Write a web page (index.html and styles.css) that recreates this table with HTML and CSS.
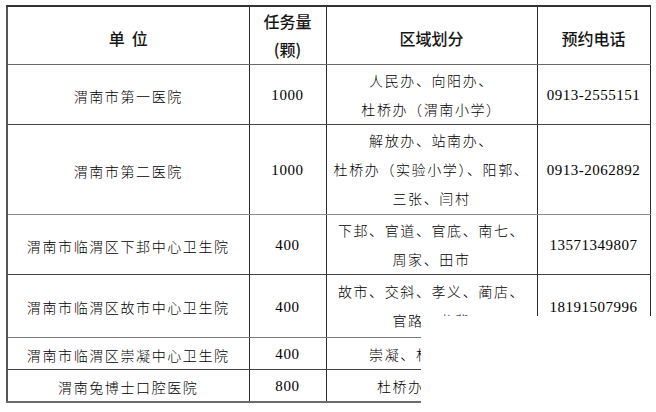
FILE: index.html
```html
<!DOCTYPE html>
<html lang="zh-CN">
<head>
<meta charset="utf-8">
<title>预约表</title>
<link rel="stylesheet" href="styles.css">
</head>
<body>
<div class="sheet">
  <table class="grid">
    <colgroup>
      <col class="c-unit"><col class="c-qty"><col class="c-area"><col class="c-tel">
    </colgroup>
    <thead>
      <tr class="r-head">
        <th class="h-unit">单&nbsp;&nbsp;位</th>
        <th class="h-qty"><div>任务量</div><div>(颗)</div></th>
        <th class="h-pad">区域划分</th>
        <th class="h-pad">预约电话</th>
      </tr>
    </thead>
    <tbody>
      <tr class="r1">
        <td class="zh">渭南市第一医院</td>
        <td class="num">1000</td>
        <td class="zh area"><div>人民办、向阳办、</div><div>杜桥办（渭南小学）</div></td>
        <td class="num tel">0913-2555151</td>
      </tr>
      <tr class="r2">
        <td class="zh">渭南市第二医院</td>
        <td class="num">1000</td>
        <td class="zh area"><div>解放办、站南办、</div><div>杜桥办（实验小学）、阳郭、</div><div>三张、闫村</div></td>
        <td class="num tel">0913-2062892</td>
      </tr>
      <tr class="r3">
        <td class="zh">渭南市临渭区下邽中心卫生院</td>
        <td class="num">400</td>
        <td class="zh area"><div>下邽、官道、官底、南七、</div><div>周家、田市</div></td>
        <td class="num tel">13571349807</td>
      </tr>
      <tr class="r4">
        <td class="zh">渭南市临渭区故市中心卫生院</td>
        <td class="num">400</td>
        <td class="zh area"><div>故市、交斜、孝义、蔺店、</div><div>官路、龙背</div></td>
        <td class="num tel">18191507996</td>
      </tr>
      <tr class="r5">
        <td class="zh">渭南市临渭区崇凝中心卫生院</td>
        <td class="num">400</td>
        <td class="zh area">崇凝、杜桥办部分</td>
        <td class="num tel">0913-2118888</td>
      </tr>
      <tr class="r6">
        <td class="zh">渭南兔博士口腔医院</td>
        <td class="num">800</td>
        <td class="zh area">杜桥办（其他）</td>
        <td class="num tel">0913-2226666</td>
      </tr>
    </tbody>
  </table>
  <div class="mask"></div>
</div>
</body>
</html>
```

FILE: styles.css
```css
html, body {
  margin: 0;
  padding: 0;
  background: #ffffff;
}

body {
  padding: 5px 0 0 6px;
  font-family: "Noto Sans CJK SC", "Noto Sans", sans-serif;
  color: #000000;
}

.sheet {
  position: relative;
  width: 650px;
  height: 407px;
}

.grid {
  border-collapse: collapse;
  table-layout: fixed;
  width: 643px;
}

.c-unit { width: 242px; }
.c-qty { width: 77px; }
.c-area { width: 211px; }
.c-tel { width: 113px; }

.grid th,
.grid td {
  border: 1px solid #2a2a2a;
  padding: 0;
  text-align: center;
  vertical-align: middle;
}

.grid tr > :first-child {
  border-left: 2px solid #555555;
}

.grid thead th {
  border-top: 2px solid #333333;
  border-bottom: 1px solid #6a6a6a;
  font-weight: 500;
  font-size: 16px;
  line-height: 28px;
  color: #151515;
}

.h-unit,
.h-pad {
  padding-top: 6px !important;
}

.h-qty div {
  line-height: 28px;
}

.r-head { height: 58px; }
.r1 { height: 59px; }
.r2 { height: 90px; }
.r3 { height: 59px; }
.r4 { height: 63px; }
.r5 { height: 32px; }
.r6 { height: 31px; }

.r1 td, .r3 td, .r5 td { border-bottom-color: #444444; }
.r2 td { border-bottom-color: #8a8a8a; }
.r4 td { border-bottom-color: #7a7a7a; }
.r6 td { border-bottom: 2px solid #6a6a6a; }

.zh {
  font-size: 14px;
  font-weight: 300;
  letter-spacing: 1.6px;
  line-height: 28px;
  padding-top: 3px !important;
}

.area {
  padding-top: 1px !important;
}

.area div {
  line-height: 29px;
}

.num {
  font-family: "Liberation Serif", "DejaVu Serif", serif;
  font-size: 15px;
  letter-spacing: 0.6px;
  padding-top: 3px !important;
}

.tel {
  letter-spacing: 0.5px;
}

.mask {
  position: absolute;
  left: 415px;
  top: 311px;
  right: -6px;
  bottom: -5px;
  background: #ffffff;
}
```
